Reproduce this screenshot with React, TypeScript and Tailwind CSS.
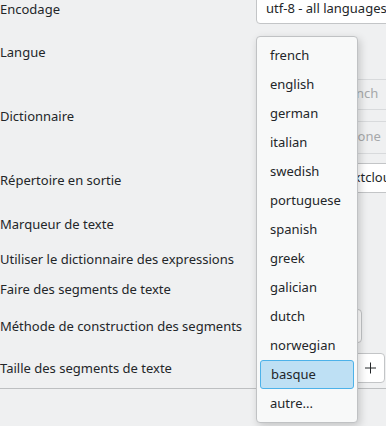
import React from 'react';

const languages = [
  'french', 'english', 'german', 'italian', 'swedish', 'portuguese', 'spanish',
  'greek', 'galician', 'dutch', 'norwegian', 'basque', 'autre...',
];

function Label({ children }: { children: React.ReactNode }) {
  return <div className="w-[256px] shrink-0 text-[13px] leading-none whitespace-nowrap">{children}</div>;
}

function App() {
  return (
    <div className="relative w-[386px] h-[426px] overflow-hidden bg-[#eff0f1] text-[#232629] font-['Noto_Sans',sans-serif]">
      <div className="flex flex-col -mt-[6px]">
        {/* Encodage */}
        <div className="flex items-center h-[30px]">
          <Label>Encodage</Label>
          <div className="h-[30px] w-[160px] shrink-0 flex items-center pl-[9px] bg-white border border-[#c3c5c7] rounded-[4px] text-[13px] whitespace-nowrap">
            utf-8 - all languages
          </div>
        </div>

        {/* Langue */}
        <div className="flex items-center h-[30px] mt-[13px]">
          <Label>Langue</Label>
          <div className="h-[30px] w-[98px] shrink-0 bg-white border border-[#c3c5c7] rounded-[4px]" />
        </div>

        {/* Dictionnaire */}
        <div className="flex items-center h-[74px] mt-[12px]">
          <Label>Dictionnaire</Label>
          <div className="flex flex-col gap-[11px] w-[150px] shrink-0">
            <div className="h-[31px] flex items-center pl-[7px] border-y border-[#d8dadc] text-[13px] text-[#a6a8aa] whitespace-nowrap">
              dictionnaire french
            </div>
            <div className="h-[33px] flex items-center pl-[16px] border-y border-[#d8dadc] text-[13px] text-[#a6a8aa] whitespace-nowrap">
              expressions None
            </div>
          </div>
        </div>

        {/* Répertoire */}
        <div className="flex items-center h-[30px] mt-[12px]">
          <Label>Répertoire en sortie</Label>
          <div className="h-[30px] w-[150px] shrink-0 -mt-[4px] flex items-center pl-[9px] bg-white border-y border-[#c3c5c7] text-[13px] whitespace-nowrap">
            /home/user/textclouds
          </div>
        </div>

        <div className="flex items-center h-[24px] mt-[17px]">
          <Label>Marqueur de texte</Label>
        </div>
        <div className="flex items-center h-[24px] mt-[11px]">
          <Label>Utiliser le dictionnaire des expressions</Label>
        </div>
        <div className="flex items-center h-[24px] mt-[6px]">
          <Label>Faire des segments de texte</Label>
        </div>

        {/* Méthode */}
        <div className="flex items-center h-[34px] mt-[8px]">
          <Label>Méthode de construction des segments</Label>
          <div className="h-[34px] w-[106px] shrink-0 bg-white border border-[#c3c5c7] rounded-[4px]" />
        </div>

        {/* Taille */}
        <div className="flex items-center h-[30px] mt-[10px]">
          <Label>Taille des segments de texte</Label>
          <div className="h-[30px] w-[129px] shrink-0 flex items-center justify-end bg-white border border-[#c3c5c7] rounded-[4px]">
            <svg width="27" height="28" viewBox="0 0 27 28" className="shrink-0">
              <path d="M13.5 8.5v11M8 14h11" stroke="#232629" strokeWidth="1" fill="none" />
            </svg>
          </div>
        </div>

        <div className="h-px bg-[#bdbfc1] mt-[5px]" />
      </div>

      {/* Language dropdown */}
      <div className="absolute left-[256px] top-[36px] w-[102px] pt-[4px] pb-[4px] bg-[#f8f9f9] border border-[#c0c2c4] rounded-[4px] shadow-[2px_3px_8px_rgba(0,0,0,0.18)]">
        {languages.map((l) =>
          l === 'basque' ? (
            <div key={l} className="h-[29px] mx-[3px] flex items-center pl-[10px] bg-[#bee0f4] border border-[#4db2e9] rounded-[3px] text-[13px]">
              {l}
            </div>
          ) : (
            <div key={l} className="h-[29px] flex items-center pl-[13px] text-[13px]">
              {l}
            </div>
          )
        )}
      </div>
    </div>
  );
}

export default App;
